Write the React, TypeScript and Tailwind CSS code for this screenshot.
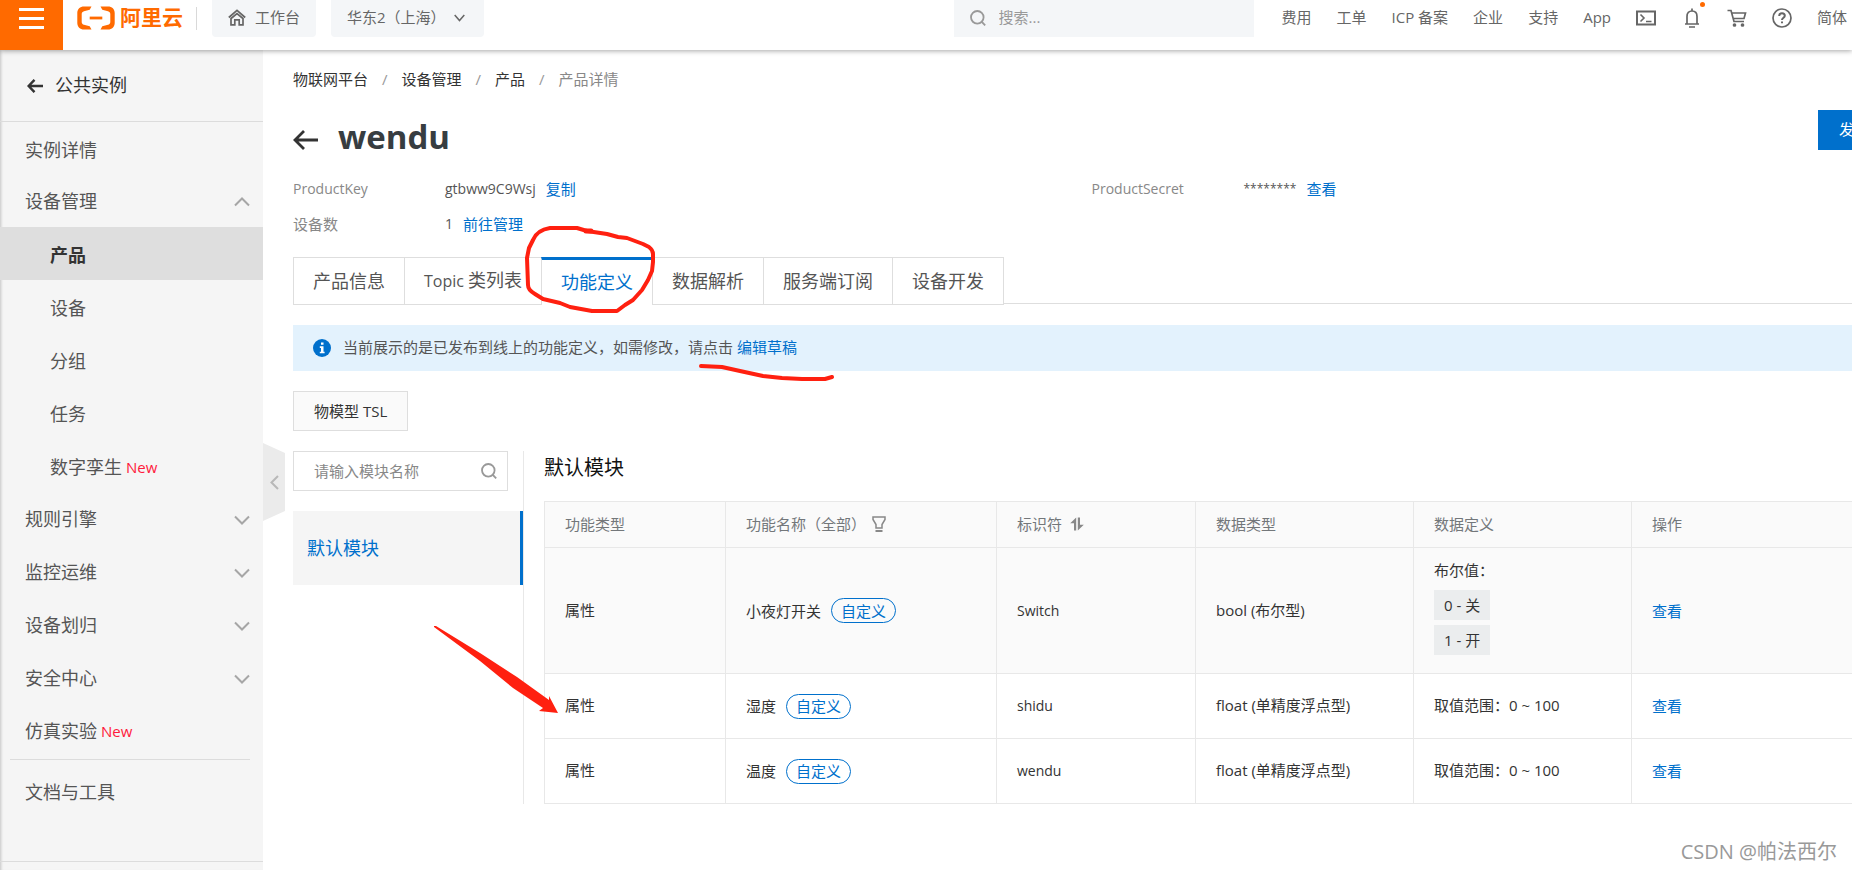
import React from 'react';

const topLinks = ['费用', '工单', 'ICP 备案', '企业', '支持', 'App'];

const subMenus = [
  { label: '产品', active: true },
  { label: '设备' },
  { label: '分组' },
  { label: '任务' },
  { label: '数字孪生', isNew: true },
];

const sideMenus = [
  { label: '规则引擎', arrow: true },
  { label: '监控运维', arrow: true },
  { label: '设备划归', arrow: true },
  { label: '安全中心', arrow: true },
  { label: '仿真实验', isNew: true },
];

const tabs = [
  { label: '产品信息' },
  { prefix: 'Topic', label: '类列表' },
  { label: '功能定义', active: true },
  { label: '数据解析' },
  { label: '服务端订阅' },
  { label: '设备开发' },
];

const rows = [
  { name: '小夜灯开关', id: 'Switch', type: 'bool (布尔型)', bools: ['0 - 关', '1 - 开'] },
  { name: '湿度', id: 'shidu', type: 'float (单精度浮点型)', range: '取值范围：0 ~ 100' },
  { name: '温度', id: 'wendu', type: 'float (单精度浮点型)', range: '取值范围：0 ~ 100' },
];

const Chevron = ({ up = false }: { up?: boolean }) => (
  <svg width="16" height="10" viewBox="0 0 16 10" fill="none" stroke="#a6a6a6" strokeWidth="2">
    <path d={up ? 'M1 8.5L8 1.5L15 8.5' : 'M1 1.5L8 8.5L15 1.5'} />
  </svg>
);

const SearchIcon = () => (
  <svg width="16" height="16" viewBox="0 0 16 16" fill="none" stroke="#999" strokeWidth="1.8">
    <circle cx="7.3" cy="7.3" r="6.3" />
    <path d="M11.8 11.8L15.2 15.4" />
  </svg>
);

const TopBar = () => {
  return (
    <header className="relative z-10 flex h-[50px] items-start bg-white text-[15px] text-[#666] shadow-[0_1px_5px_rgba(0,0,0,0.35)]">
      <button type="button" aria-label="菜单" className="flex h-[50px] w-[63px] shrink-0 flex-col items-center gap-[6px] bg-[#ff6a00] pt-2">
        <span className="h-[3px] w-[25px] bg-white" />
        <span className="h-[3px] w-[25px] bg-white" />
        <span className="h-[3px] w-[25px] bg-white" />
      </button>

      <a href="#" className="ml-[14px] flex h-[35px] shrink-0 items-center gap-[5px] text-[21px] font-bold text-[#ff6a00]">
        <svg width="38" height="24" viewBox="0 0 38 24" fill="#ff6a00">
          <path d="M14.5 0.5H7C3 0.5 0.3 3.2 0.3 7V17C0.3 20.8 3 23.5 7 23.5H14.5L12.7 20.2L7 18.8C5.6 18.4 4.7 17.4 4.7 16V8C4.7 6.6 5.6 5.6 7 5.2L12.7 3.8Z" />
          <path d="M23.5 0.5H31C35 0.5 37.7 3.2 37.7 7V17C37.7 20.8 35 23.5 31 23.5H23.5L25.3 20.2L31 18.8C32.4 18.4 33.3 17.4 33.3 16V8C33.3 6.6 32.4 5.6 31 5.2L25.3 3.8Z" />
          <path d="M12.7 10.6H25.3V13.4H12.7Z" />
        </svg>
        阿里云
      </a>
      <span className="mt-[7px] ml-[13px] h-[23px] w-px bg-[#d9d9d9]" />

      <a href="#" className="ml-[15px] flex h-[37px] w-[104px] shrink-0 items-center gap-[9px] rounded-b-sm bg-[#f4f6f8] pb-[2px] pl-4">
        <svg width="18" height="17" viewBox="0 0 18 17" fill="none" stroke="#666" strokeWidth="1.7">
          <path d="M0.8 8.5L9 1.3L17.2 8.5" />
          <path d="M3 9.5V15.8H6.8V10.8H11.2V15.8H15V9.5L9 4.6Z" />
        </svg>
        工作台
      </a>
      <button type="button" className="ml-[15px] flex h-[37px] w-[153px] shrink-0 items-center justify-between rounded-b-sm bg-[#f4f6f8] pr-[19px] pb-[2px] pl-4">
        华东2（上海）
        <svg width="11" height="8" viewBox="0 0 11 8" fill="none" stroke="#666" strokeWidth="1.5">
          <path d="M0.7 1L5.5 6.5L10.3 1" />
        </svg>
      </button>

      <div className="ml-auto flex h-[37px] w-[300px] shrink-0 items-center gap-[13px] bg-[#f4f6f8] pb-[2px] pl-4">
        <SearchIcon />
        <input aria-label="搜索" placeholder="搜索..." className="w-[200px] bg-transparent outline-none placeholder:text-[#999]" />
      </div>

      <nav className="mr-[5px] ml-7 flex h-[35px] shrink-0 items-center gap-[25px] whitespace-nowrap">
        {topLinks.map((link) => (
          <a key={link} href="#">
            {link}
          </a>
        ))}
        <a href="#" aria-label="Cloud Shell">
          <svg width="20" height="16" viewBox="0 0 20 16" fill="none" stroke="#666" strokeWidth="2">
            <path d="M1 1.5H19V14.5H1Z" />
            <path d="M4.5 4.5L8 8L4.5 11.5M10 11.5H15.5" strokeWidth="1.6" />
          </svg>
        </a>
        <a href="#" aria-label="消息" className="relative ml-[3px]">
          <svg width="16" height="20" viewBox="0 0 16 20" fill="none" stroke="#666" strokeWidth="1.7">
            <path d="M8 0.5V3M1 16H15M3 16V8.5C3 5 5 3 8 3C11 3 13 5 13 8.5V16M5 19H11" />
          </svg>
          <span className="absolute -top-[6px] -right-[5px] h-[5px] w-[5px] rounded-full bg-[#ff6a00]" />
        </a>
        <a href="#" aria-label="购物车" className="ml-[2px]">
          <svg width="20" height="18" viewBox="0 0 20 18" fill="none" stroke="#666" strokeWidth="1.7">
            <path d="M0.5 1.500H4L7 12.500H17M4.800 4H18.500L17 9.500H6.300" />
            <circle cx="7.5" cy="16" r="1" fill="#666" />
            <circle cx="15.5" cy="16" r="1" fill="#666" />
          </svg>
        </a>
        <a href="#" aria-label="帮助">
          <svg width="20" height="20" viewBox="0 0 20 20" fill="none" stroke="#666" strokeWidth="1.7">
            <circle cx="10" cy="10" r="9" />
            <path d="M7.2 8C7.2 6.2 8.4 5.2 10 5.2C11.6 5.2 12.8 6.2 12.8 7.7C12.8 9.6 10 9.8 10 12M10 13.5V15.3" strokeWidth="2" />
          </svg>
        </a>
        <a href="#">简体</a>
      </nav>
    </header>
  );
};

const SideBar = () => {
  return (
    <aside className="relative flex w-[263px] shrink-0 flex-col bg-[#f5f5f5] text-[18px] text-[#555] shadow-[inset_3px_0_3px_-2px_rgba(0,0,0,0.2)]">
      <a href="#" className="flex h-[72px] items-center gap-3 border-b border-[#dcdcdc] pl-[27px] text-[#333]">
        <svg width="16" height="14" viewBox="0 0 16 14" fill="none" stroke="#333" strokeWidth="2.4">
          <path d="M16 7H2M7.5 0.8L1.6 7L7.5 13.2" />
        </svg>
        公共实例
      </a>

      <nav>
        <a href="#" className="flex h-[52px] items-center pt-1 pl-[25px]">
          实例详情
        </a>
        <button type="button" className="flex h-[53px] w-full items-center justify-between pt-[2px] pr-[13px] pl-[25px]">
          设备管理
          <Chevron up />
        </button>
        {subMenus.map((menu) => (
          <a
            key={menu.label}
            href="#"
            className={
              menu.active
                ? 'flex h-[53px] items-center bg-[#dedede] pt-1 pl-[50px] font-bold text-[#333]'
                : 'flex h-[53px] items-center pt-1 pl-[50px]'
            }
          >
            {menu.label}
            {menu.isNew && <span className="ml-1 text-[15px] text-[#ff1a3c]">New</span>}
          </a>
        ))}
        {sideMenus.map((menu) => (
          <a key={menu.label} href="#" className="flex h-[53px] items-center pt-[2px] pr-[13px] pl-[25px]">
            {menu.label}
            {menu.isNew && <span className="ml-1 text-[15px] text-[#ff1a3c]">New</span>}
            {menu.arrow && (
              <span className="ml-auto">
                <Chevron />
              </span>
            )}
          </a>
        ))}
      </nav>
      <hr className="mt-[2px] mr-[13px] ml-[10px] border-[#dcdcdc]" />
      <a href="#" className="mt-[5px] flex h-[53px] items-center pt-[2px] pl-[25px]">
        文档与工具
      </a>
      <div className="mt-auto h-[9px] border-t border-[#dcdcdc]" />

      {/* 收起侧边栏 */}
      <button
        type="button"
        aria-label="收起"
        className="absolute top-[393px] left-full flex h-[78px] w-[22px] items-center justify-center bg-[#ebebeb] [clip-path:polygon(0_0,100%_10px,100%_68px,0_100%)]"
      >
        <svg width="9" height="15" viewBox="0 0 9 15" fill="none" stroke="#b8b8b8" strokeWidth="2">
          <path d="M8 1L1.5 7.5L8 14" />
        </svg>
      </button>
    </aside>
  );
};

const FunctionTable = () => {
  return (
    <table className="mt-[18px] w-full table-fixed border-collapse text-left text-[15px] text-[#333]">
      <colgroup>
        <col className="w-[181px]" />
        <col className="w-[271px]" />
        <col className="w-[199px]" />
        <col className="w-[218px]" />
        <col className="w-[218px]" />
        <col />
      </colgroup>
      <thead>
        <tr className="h-[46px] bg-[#fafafa] text-[#73777a]">
          <th className="border border-[#e8e8e8] px-5 pb-[2px] font-normal">功能类型</th>
          <th className="border border-[#e8e8e8] px-5 pb-[2px] font-normal">
            <span className="flex items-center gap-[6px]">
              功能名称（全部）
              <svg width="14" height="16" viewBox="0 0 14 16" fill="none" stroke="#888" strokeWidth="1.5">
                <path d="M1 1H13V3.5L10 8.5V12H4V8.5L1 3.5Z" />
                <path d="M3.5 15H10.5" strokeWidth="2" />
              </svg>
            </span>
          </th>
          <th className="border border-[#e8e8e8] px-5 pb-[2px] font-normal">
            <span className="flex items-center gap-2">
              标识符
              <svg width="14" height="14" viewBox="0 0 14 14" fill="#888">
                <path d="M6.2 0.5V13.5H4V6.2H0.2Z" />
                <path d="M7.8 13.5V0.5H10V7.8H13.8Z" />
              </svg>
            </span>
          </th>
          <th className="border border-[#e8e8e8] px-5 pb-[2px] font-normal">数据类型</th>
          <th className="border border-[#e8e8e8] px-5 pb-[2px] font-normal">数据定义</th>
          <th className="border border-[#e8e8e8] px-5 pb-[2px] font-normal">操作</th>
        </tr>
      </thead>
      <tbody>
        {rows.map((row) => (
          <tr key={row.id} className={row.bools ? 'h-[126px] bg-[#fafafa]' : 'h-[65px]'}>
            <td className="border border-[#e8e8e8] px-5 pb-[2px]">属性</td>
            <td className="border border-[#e8e8e8] px-5">
              <span className="flex items-center gap-[10px]">
                {row.name}
                <span className="flex h-[25px] items-center rounded-full border border-[#0070cc] px-[9px] text-[#0070cc]">
                  自定义
                </span>
              </span>
            </td>
            <td className="border border-[#e8e8e8] px-5 text-sm">{row.id}</td>
            <td className="border border-[#e8e8e8] px-5 pb-[2px]">{row.type}</td>
            <td className="border border-[#e8e8e8] px-5 pb-[2px]">
              {row.bools ? (
                <div className="flex flex-col items-start gap-[5px] pb-1">
                  <span className="mb-[5px] leading-5">布尔值：</span>
                  {row.bools.map((item) => (
                    <span key={item} className="flex h-[30px] items-center bg-[#ebedee] px-[10px]">
                      {item}
                    </span>
                  ))}
                </div>
              ) : (
                row.range
              )}
            </td>
            <td className="border border-[#e8e8e8] px-5">
              <a href="#" className="text-[#0070cc]">
                查看
              </a>
            </td>
          </tr>
        ))}
      </tbody>
    </table>
  );
};

const ProductDetail = () => {
  return (
    <main className="-mr-[38px] min-w-0 flex-1 pl-[30px] text-[15px] leading-5 text-[#555]">
      <nav className="mt-[19px] flex gap-[14px] text-[#333]">
        <a href="#">物联网平台</a>
        <span className="text-[#999]">/</span>
        <a href="#">设备管理</a>
        <span className="text-[#999]">/</span>
        <a href="#">产品</a>
        <span className="text-[#999]">/</span>
        <span className="text-[#888]">产品详情</span>
      </nav>

      <div className="mt-[21px] flex h-10 justify-between">
        <div className="flex items-center gap-5">
          <a href="#" aria-label="返回" className="mt-5">
            <svg width="25" height="20" viewBox="0 0 25 20" fill="none" stroke="#333" strokeWidth="2.8">
              <path d="M25 10H2M11 1L2 10L11 19" />
            </svg>
          </a>
          <h1 className="mt-[14px] text-[33px] leading-10 font-bold text-[#373d41]">wendu</h1>
        </div>
        <button type="button" className="h-10 w-[72px] bg-[#0070cc] pb-[2px] text-white">
          发布
        </button>
      </div>

      <dl className="mt-[29px] grid grid-cols-2 gap-y-[15px]">
        <div className="flex">
          <dt className="w-[152px] text-sm text-[#888]">ProductKey</dt>
          <dd className="flex gap-[10px]">
            <span className="text-sm">gtbww9C9Wsj</span>
            <a href="#" className="text-[#0070cc]">
              复制
            </a>
          </dd>
        </div>
        <div className="flex">
          <dt className="w-[152px] text-sm text-[#888]">ProductSecret</dt>
          <dd className="flex gap-[10px]">
            <span className="text-xs leading-5">********</span>
            <a href="#" className="text-[#0070cc]">
              查看
            </a>
          </dd>
        </div>
        <div className="flex">
          <dt className="w-[152px] text-[#888]">设备数</dt>
          <dd className="flex gap-[10px]">
            <span className="text-sm">1</span>
            <a href="#" className="text-[#0070cc]">
              前往管理
            </a>
          </dd>
        </div>
      </dl>

      <div role="tablist" className="mt-[23px] flex">
        {tabs.map((tab) => (
          <button
            key={tab.label}
            type="button"
            role="tab"
            aria-selected={!!tab.active}
            className={
              tab.active
                ? 'h-12 border-t-3 border-l border-t-[#0070cc] border-l-[#dedede] px-[19px] pb-[2px] text-[18px] text-[#0070cc]'
                : 'h-12 border-y border-l border-[#dedede] px-[19px] text-[18px] last-of-type:border-r'
            }
          >
            {tab.prefix && <span className="text-base">{tab.prefix} </span>}
            {tab.label}
          </button>
        ))}
        <span className="h-[47px] flex-1 border-b border-[#dedede]" />
      </div>

      <div className="mt-5 flex h-[46px] items-center bg-[#e3f2fd] pl-5">
        <svg width="18" height="18" viewBox="0 0 18 18" fill="#0070cc">
          <circle cx="9" cy="9" r="9" />
          <path d="M8 3.5H10.5V5.8H8ZM6.8 7.3H10.5V12.7H11.6V14.3H6.8V12.7H8V8.9H6.8Z" fill="#fff" />
        </svg>
        <p className="ml-3 pb-[2px]">
          当前展示的是已发布到线上的功能定义，如需修改，请点击{' '}
          <a href="#" className="text-[#0070cc]">
            编辑草稿
          </a>
        </p>
      </div>

      <button type="button" className="mt-5 h-10 border border-[#dedede] bg-[#fafafa] px-5 text-[#333]">
        物模型 TSL
      </button>

      <div className="mt-5 flex">
        <div className="w-[231px] shrink-0 border-r border-[#e8e8e8]">
          <div className="mr-[15px] flex h-10 items-center border border-[#dedede] pr-[10px] pl-5">
            <input aria-label="模块名称" placeholder="请输入模块名称" className="w-0 flex-1 outline-none placeholder:text-[#888]" />
            <SearchIcon />
          </div>
          <a href="#" className="mt-5 flex h-[74px] items-center border-r-3 border-[#0070cc] bg-[#f5f5f5] pl-[14px] text-[18px] text-[#0070cc]">
            默认模块
          </a>
        </div>
        <div className="min-w-0 flex-1 pl-5">
          <h2 className="pt-[2px] text-[20px] leading-[30px] text-[#111]">默认模块</h2>
          <FunctionTable />
        </div>
      </div>
    </main>
  );
};

// 红色手绘标注
const Marks = () => (
  <svg className="pointer-events-none absolute top-0 left-0 z-20 h-full w-full" fill="none" stroke="#ff2010" strokeWidth="4" strokeLinejoin="round" strokeLinecap="round">
    <path d="M550 228H577L587 231L607 234L618 237L627 238L643 244L649 247Q653 250 653 254V262L652 271L648 280L642 290L633 300L625 305L617 311H592L570 307L560 303L543 299L535 294Q528 290 528 285L527 258L529 248L533 240Q537 230 550 228Z" />
    <path d="M586 231L591 231" strokeWidth="5" />
    <path d="M701 366L722 367L740 371L763 376L782 378L802 379H825L832 377" />
    <path d="M434 626L436 626L480 653L517 677L549 700L549 696L558 713L539 711L543 708L513 688L480 661L434 627Z" fill="#ff2010" stroke="none" />
  </svg>
);

const App = () => {
  return (
    <div className="relative flex min-h-screen flex-col overflow-hidden bg-white font-['Open_Sans','Noto_Sans_CJK_SC',sans-serif]">
      <TopBar />
      <div className="flex flex-1">
        <SideBar />
        <ProductDetail />
      </div>
      <Marks />
      <p className="absolute right-[15px] bottom-1 text-[20px] leading-7 text-[#999]">CSDN @帕法西尔</p>
    </div>
  );
};

export default App;
